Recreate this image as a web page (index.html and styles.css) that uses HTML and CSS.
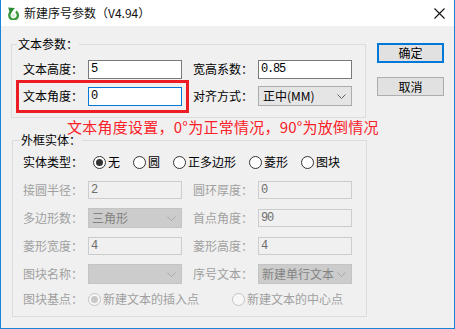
FILE: index.html
```html
<!DOCTYPE html>
<html lang="zh-CN">
<head>
  <meta charset="UTF-8" />
  <title>新建序号参数（V4.94）</title>
  <link rel="stylesheet" href="styles.css">
</head>
<body>
  <div class="window">
    <div class="titlebar">
      <svg class="app-icon" width="12" height="13" viewBox="0 0 12 13">
        <path d="M3.6 5.2 A4.3 4.3 0 1 0 8.8 4.6" fill="none" stroke="#3c9b3c" stroke-width="2.4"/>
        <path d="M1.2 0.6 L7.8 0.9 L3.2 7.2 Z" fill="#2e8b35"/>
        <circle cx="6.4" cy="8.6" r="1.8" fill="#d7eed7"/>
      </svg>
      <span class="title">新建序号参数（V4.94）</span>
      <svg class="close" width="11" height="11" viewBox="0 0 11 11">
        <path d="M0.5 0.5 L10.5 10.5 M10.5 0.5 L0.5 10.5" stroke="#111" stroke-width="1.1"/>
      </svg>
    </div>

    <div class="client">
      <div class="main">
        <fieldset class="group group-text">
          <legend>文本参数：</legend>
          <div class="grid">
            <span class="lbl">文本高度：</span>
            <div class="edit">5</div>
            <span class="lbl">宽高系数：</span>
            <div class="edit">0.85</div>

            <div class="marked">
              <span class="lbl">文本角度：</span>
              <div class="edit focus">0</div>
            </div>
            <span class="lbl">对齐方式：</span>
            <div class="combo">
              <span>正中(MM)</span>
              <svg class="chev" width="9" height="5" viewBox="0 0 9 5"><path d="M0.5 0.5 L4.5 4.5 L8.5 0.5" fill="none" stroke="#606060"/></svg>
            </div>
          </div>
        </fieldset>

        <p class="note">文本角度设置，0°为正常情况，90°为放倒情况</p>

        <fieldset class="group group-frame">
          <legend>外框实体：</legend>
          <div class="grid grid-frame">
            <span class="lbl">实体类型：</span>
            <div class="options">
              <span class="opt"><span class="radio on"></span>无</span>
              <span class="opt"><span class="radio"></span>圆</span>
              <span class="opt"><span class="radio"></span>正多边形</span>
              <span class="opt"><span class="radio"></span>菱形</span>
              <span class="opt"><span class="radio"></span>图块</span>
            </div>

            <span class="lbl off">接圆半径：</span>
            <div class="edit disabled">2</div>
            <span class="lbl off">圆环厚度：</span>
            <div class="edit disabled">0</div>

            <span class="lbl off">多边形数：</span>
            <div class="combo disabled">
              <span>三角形</span>
              <svg class="chev" width="9" height="5" viewBox="0 0 9 5"><path d="M0.5 0.5 L4.5 4.5 L8.5 0.5" fill="none" stroke="#a8a8a8"/></svg>
            </div>
            <span class="lbl off">首点角度：</span>
            <div class="edit disabled">90</div>

            <span class="lbl off">菱形宽度：</span>
            <div class="edit disabled">4</div>
            <span class="lbl off">菱形高度：</span>
            <div class="edit disabled">4</div>

            <span class="lbl off">图块名称：</span>
            <div class="combo disabled">
              <span></span>
              <svg class="chev" width="9" height="5" viewBox="0 0 9 5"><path d="M0.5 0.5 L4.5 4.5 L8.5 0.5" fill="none" stroke="#a8a8a8"/></svg>
            </div>
            <span class="lbl off">序号文本：</span>
            <div class="combo disabled">
              <span>新建单行文本</span>
              <svg class="chev" width="9" height="5" viewBox="0 0 9 5"><path d="M0.5 0.5 L4.5 4.5 L8.5 0.5" fill="none" stroke="#a8a8a8"/></svg>
            </div>
          </div>

          <div class="base-row">
            <span class="lbl off">图块基点：</span>
            <span class="opt off"><span class="radio disabled on"></span>新建文本的插入点</span>
            <span class="opt off second"><span class="radio disabled"></span>新建文本的中心点</span>
          </div>
        </fieldset>
      </div>

      <div class="buttons">
        <div class="btn default">确定</div>
        <div class="btn">取消</div>
      </div>
    </div>
  </div>
</body>
</html>
```

FILE: styles.css
```css
* { box-sizing: border-box; }
body {
  margin: 0;
  font-family: "Noto Sans CJK SC", "Noto Sans", sans-serif;
  font-size: 12px;
  color: #000;
  background: #fff;
}
.window {
  width: 455px;
  height: 329px;
  border: 1px solid #1883d7;
  border-top: none;
  display: flex;
  flex-direction: column;
  background: #f0f0f0;
}
.titlebar {
  height: 26px;
  flex: none;
  background: #fff;
  display: flex;
  align-items: center;
  padding: 0 9px 0 6px;
}
.app-icon { margin-top: 1px; }
.title {
  margin-left: 5px;
  flex: 1;
  line-height: 14px;
  color: #111;
}
.close { margin-top: 1px; }

.client {
  flex: 1;
  display: flex;
  align-items: flex-start;
}
.main {
  margin-left: 10px;
  width: 356px;
}
.group {
  margin: 0;
  width: 355px;
  min-width: 0;
  border: 1px solid #dcdcdc;
}
.group legend {
  padding: 0 1px;
  line-height: 14px;
}
.group-text {
  margin-top: 11px;
  padding: 8px 0 11px 11px;
}
.group-text legend { margin-left: -6px; }
.group-frame {
  margin-left: 1px;
  padding: 5px 0 7px 10px;
}
.group-frame legend { margin-left: -3px; }

.grid {
  display: grid;
  grid-template-columns: 65px 105px 65px 94px;
  grid-auto-rows: 20px;
  row-gap: 7px;
  align-items: center;
}
.grid-frame { row-gap: 8px; }
.lbl {
  white-space: nowrap;
  line-height: 14px;
}
.lbl.off { color: #a0a0a0; }

.marked {
  grid-column: 1 / 3;
  display: flex;
  align-items: center;
  width: 159px;
  outline: 3px solid #ed1c24;
  outline-offset: 4px;
}
.marked .lbl { width: 65px; }

.edit {
  width: 94px;
  height: 19px;
  border: 1px solid #7a7a7a;
  background: #fff;
  padding: 0 2px;
  font-family: "Liberation Mono", monospace;
  font-size: 12px;
  letter-spacing: -1.2px;
  line-height: 17px;
}
.edit.focus { border-color: #0078d7; }
.edit.disabled {
  height: 18px;
  line-height: 16px;
  border-color: #cccccc;
  background: #f0f0f0;
  color: #6d6d6d;
}
.combo {
  width: 94px;
  height: 20px;
  border: 1px solid #acacac;
  background: #e5e5e5;
  display: flex;
  align-items: center;
  justify-content: space-between;
  padding: 0 5px 0 4px;
  line-height: 14px;
  white-space: nowrap;
}
.combo.disabled {
  background: #cccccc;
  border-color: #c4c4c4;
  color: #838383;
  padding-left: 3px;
}

.note {
  margin: 1px 0 -2px 56px;
  line-height: 16px;
  font-size: 15px;
  letter-spacing: 0.25px;
  color: #fa2128;
  white-space: nowrap;
}

.options {
  grid-column: 2 / 5;
  display: flex;
  gap: 13px;
  padding-left: 5px;
}
.opt {
  display: flex;
  align-items: center;
  gap: 2px;
  line-height: 14px;
  white-space: nowrap;
}
.opt.off { color: #a0a0a0; }
.radio {
  width: 13px;
  height: 13px;
  border: 1px solid #333;
  border-radius: 50%;
  background: #fff;
  display: flex;
  align-items: center;
  justify-content: center;
}
.radio.on::after {
  content: "";
  width: 7px;
  height: 7px;
  border-radius: 50%;
  background: #333;
}
.radio.disabled {
  border-color: #c3c3c3;
  background: #f7f7f7;
}
.radio.disabled.on::after { background: #c8c8c8; }

.base-row {
  margin-top: 5px;
  height: 20px;
  display: flex;
  align-items: center;
}
.base-row .lbl { width: 65px; }
.base-row .second { margin-left: 33px; }

.buttons {
  margin: 17px 0 0 10px;
  display: flex;
  flex-direction: column;
  gap: 14px;
}
.btn {
  width: 67px;
  height: 19px;
  border: 1px solid #adadad;
  background: #e1e1e1;
  display: flex;
  align-items: center;
  justify-content: center;
  line-height: 14px;
}
.btn.default {
  height: 20px;
  border: 2px solid #0078d7;
}
```
